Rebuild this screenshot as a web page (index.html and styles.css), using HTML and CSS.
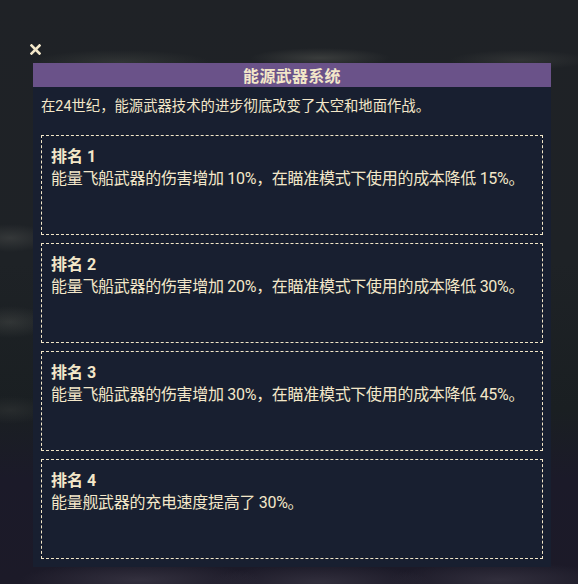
FILE: index.html
```html
<!DOCTYPE html>
<html lang="zh-CN">
<head>
    <meta charset="UTF-8">
    <meta name="viewport" content="width=device-width, initial-scale=1.0">
    <title>能源武器系统</title>
    <link rel="stylesheet" href="styles.css">
</head>
<body>
    <div class="overlay">
        <button class="close-btn" aria-label="关闭">
            <svg width="11" height="11" viewBox="0 0 11 11">
                <path d="M1.5 1.5 L9.5 9.5 M9.5 1.5 L1.5 9.5" stroke="#f3e7c9" stroke-width="2.6" stroke-linecap="square"/>
            </svg>
        </button>

        <div class="panel">
            <div class="panel-header">能源武器系统</div>
            <div class="panel-body">
                <p class="intro">在24世纪，能源武器技术的进步彻底改变了太空和地面作战。</p>

                <div class="rank-list">
                    <div class="rank-card">
                        <div class="rank-title">排名 1</div>
                        <div class="rank-desc">能量飞船武器的伤害增加 10%，在瞄准模式下使用的成本降低 15%。</div>
                    </div>
                    <div class="rank-card">
                        <div class="rank-title">排名 2</div>
                        <div class="rank-desc">能量飞船武器的伤害增加 20%，在瞄准模式下使用的成本降低 30%。</div>
                    </div>
                    <div class="rank-card">
                        <div class="rank-title">排名 3</div>
                        <div class="rank-desc">能量飞船武器的伤害增加 30%，在瞄准模式下使用的成本降低 45%。</div>
                    </div>
                    <div class="rank-card">
                        <div class="rank-title">排名 4</div>
                        <div class="rank-desc">能量舰武器的充电速度提高了 30%。</div>
                    </div>
                </div>
            </div>
        </div>
    </div>
</body>
</html>
```

FILE: styles.css
```css
html, body {
    height: 100%;
}
body {
    margin: 0;
    font-family: Roboto, "Noto Sans CJK SC", sans-serif;
    color: #f3e7c9;
    background-color: #1e2125;
    background-image:
        radial-gradient(ellipse 90px 12px at 120px 62px, rgba(70, 74, 70, 0.45), transparent),
        radial-gradient(ellipse 70px 10px at 320px 58px, rgba(80, 82, 78, 0.55), transparent),
        radial-gradient(ellipse 70px 10px at 520px 60px, rgba(70, 72, 70, 0.45), transparent),
        radial-gradient(ellipse 40px 14px at 10px 238px, rgba(80, 82, 80, 0.45), transparent),
        radial-gradient(ellipse 40px 16px at 10px 322px, rgba(75, 78, 75, 0.45), transparent),
        radial-gradient(ellipse 40px 14px at 10px 410px, rgba(60, 62, 62, 0.4), transparent),
        radial-gradient(ellipse 120px 18px at 140px 580px, rgba(70, 66, 80, 0.55), transparent),
        radial-gradient(ellipse 110px 18px at 320px 582px, rgba(70, 66, 80, 0.5), transparent),
        radial-gradient(ellipse 110px 18px at 500px 580px, rgba(70, 66, 80, 0.5), transparent),
        linear-gradient(to bottom, #1f2226 0, #1e2226 45%, #1a1f22 70%, #1b1a29 82%, #1c1a28 100%);
}

.overlay {
    padding: 44px 27px 0 30px;
}

.close-btn {
    display: block;
    width: 11px;
    height: 11px;
    padding: 0;
    margin: 0 0 8px 0;
    border: none;
    background: none;
    cursor: pointer;
}
.close-btn svg {
    display: block;
}

.panel {
    width: 518px;
    margin-left: 3px;
    background-color: #181f30;
}

.panel-header {
    height: 24px;
    line-height: 24px;
    background-color: #6a5289;
    text-align: center;
    font-size: 16px;
    font-weight: bold;
    font-family: "Noto Sans CJK SC", sans-serif;
    letter-spacing: 0.3px;
}

.panel-body {
    padding: 0 8px 8px 8px;
}

.intro {
    margin: 0 0 18px 0;
    padding-top: 10px;
    font-size: 14.35px;
    line-height: 20px;
}

.rank-list {
    display: flex;
    flex-direction: column;
    gap: 8px;
}

.rank-card {
    height: 100px;
    box-sizing: border-box;
    border: 1px dashed #f3e7c9;
    padding: 10px 9px;
}

.rank-title {
    font-size: 16px;
    font-weight: bold;
    line-height: 22px;
}

.rank-desc {
    font-size: 16px;
    letter-spacing: -0.3px;
    line-height: 22px;
    white-space: nowrap;
}
```
